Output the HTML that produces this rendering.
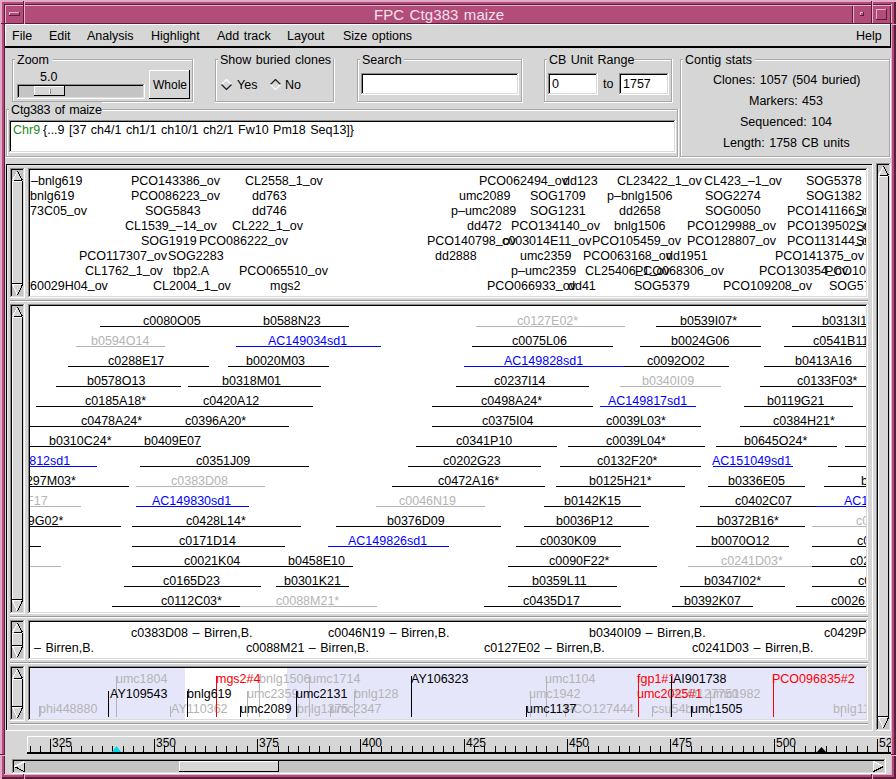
<!DOCTYPE html>
<html><head><meta charset="utf-8"><style>
html,body{margin:0;padding:0;}
body{width:896px;height:779px;overflow:hidden;position:relative;font-family:"Liberation Sans", sans-serif;font-size:12.5px;color:#000;}
b{position:absolute;display:block;}
i{position:absolute;font-style:normal;white-space:nowrap;line-height:14px;height:14px;word-spacing:1px;}
.c{position:absolute;overflow:hidden;}
u{text-decoration:none;position:relative;top:-2px;}
</style></head><body>
<b style="left:0px;top:0px;width:896px;height:779px;background:#b24c78"></b>
<b style="left:0px;top:0px;width:896px;height:2px;background:#e2aac6"></b>
<b style="left:0px;top:0px;width:2px;height:779px;background:#e2aac6"></b>
<b style="left:894px;top:2px;width:2px;height:777px;background:#5a1e3a"></b>
<b style="left:2px;top:777px;width:894px;height:2px;background:#5a1e3a"></b>
<b style="left:4px;top:4px;width:887px;height:1px;background:#5a1e3a"></b>
<b style="left:4px;top:4px;width:1px;height:771px;background:#5a1e3a"></b>
<b style="left:5px;top:5px;width:886px;height:1px;background:#e8b0cc"></b>
<b style="left:5px;top:5px;width:1px;height:19px;background:#e8b0cc"></b>
<b style="left:891px;top:4px;width:1px;height:771px;background:#e8b0cc"></b>
<b style="left:4px;top:774px;width:888px;height:1px;background:#e8b0cc"></b>
<b style="left:23px;top:1px;width:1px;height:23px;background:#5a1e3a"></b>
<b style="left:1px;top:23px;width:23px;height:1px;background:#5a1e3a"></b>
<b style="left:24px;top:0px;width:1px;height:24px;background:#e8b0cc"></b>
<b style="left:9px;top:12px;width:11px;height:1px;background:#e8b0cc"></b>
<b style="left:9px;top:12px;width:1px;height:4px;background:#e8b0cc"></b>
<b style="left:9px;top:15px;width:11px;height:1px;background:#5a1e3a"></b>
<b style="left:19px;top:12px;width:1px;height:4px;background:#5a1e3a"></b>
<b style="left:25px;top:23px;width:828px;height:1px;background:#5a1e3a"></b>
<b style="left:852px;top:6px;width:1px;height:18px;background:#5a1e3a"></b>
<b style="left:853px;top:5px;width:1px;height:19px;background:#e8b0cc"></b>
<b style="left:871px;top:1px;width:1px;height:23px;background:#5a1e3a"></b>
<b style="left:872px;top:0px;width:1px;height:24px;background:#e8b0cc"></b>
<b style="left:853px;top:23px;width:39px;height:1px;background:#5a1e3a"></b>
<b style="left:890px;top:6px;width:1px;height:18px;background:#5a1e3a"></b>
<b style="left:860px;top:12px;width:4px;height:1px;background:#e8b0cc"></b>
<b style="left:860px;top:12px;width:1px;height:4px;background:#e8b0cc"></b>
<b style="left:860px;top:15px;width:4px;height:1px;background:#5a1e3a"></b>
<b style="left:863px;top:12px;width:1px;height:4px;background:#5a1e3a"></b>
<b style="left:891px;top:24px;width:5px;height:1px;background:#e8b0cc"></b>
<b style="left:876px;top:9px;width:11px;height:1px;background:#e8b0cc"></b>
<b style="left:876px;top:9px;width:1px;height:11px;background:#e8b0cc"></b>
<b style="left:876px;top:19px;width:11px;height:1px;background:#5a1e3a"></b>
<b style="left:886px;top:9px;width:1px;height:11px;background:#5a1e3a"></b>
<i style="left:374px;top:8px;color:#f4e2ea;font-size:15px;letter-spacing:0.1px;">FPC Ctg383 maize</i>
<b style="left:5px;top:24px;width:886px;height:750px;background:#d6d6d6"></b>
<b style="left:5px;top:24px;width:886px;height:1px;background:#ffffff"></b>
<b style="left:5px;top:24px;width:1px;height:23px;background:#ffffff"></b>
<b style="left:5px;top:46px;width:886px;height:2px;background:#000"></b>
<b style="left:890px;top:24px;width:1px;height:24px;background:#000"></b>
<i style="left:12px;top:29px;">File</i>
<i style="left:49px;top:29px;">Edit</i>
<i style="left:87px;top:29px;">Analysis</i>
<i style="left:151px;top:29px;">Highlight</i>
<i style="left:217px;top:29px;">Add track</i>
<i style="left:287px;top:29px;">Layout</i>
<i style="left:343px;top:29px;">Size options</i>
<i style="left:856px;top:29px;">Help</i>
<b style="left:12px;top:59px;width:182px;height:1px;background:#a8a8a8"></b>
<b style="left:12px;top:59px;width:1px;height:44px;background:#a8a8a8"></b>
<b style="left:12px;top:102px;width:182px;height:1px;background:#ffffff"></b>
<b style="left:193px;top:59px;width:1px;height:44px;background:#ffffff"></b>
<b style="left:13px;top:60px;width:180px;height:1px;background:#ffffff"></b>
<b style="left:13px;top:60px;width:1px;height:42px;background:#ffffff"></b>
<b style="left:13px;top:101px;width:180px;height:1px;background:#a8a8a8"></b>
<b style="left:192px;top:60px;width:1px;height:42px;background:#a8a8a8"></b>
<b style="left:15px;top:52px;width:38px;height:12px;background:#d6d6d6"></b>
<i style="left:17px;top:53px;">Zoom</i>
<i style="left:40px;top:70px;">5.0</i>
<b style="left:17px;top:84px;width:128px;height:15px;background:#c4c4c4"></b>
<b style="left:17px;top:84px;width:127px;height:1px;background:#8c8c8c"></b>
<b style="left:17px;top:84px;width:1px;height:14px;background:#8c8c8c"></b>
<b style="left:18px;top:85px;width:126px;height:1px;background:#000"></b>
<b style="left:18px;top:85px;width:1px;height:13px;background:#000"></b>
<b style="left:18px;top:97px;width:126px;height:1px;background:#dadada"></b>
<b style="left:143px;top:85px;width:1px;height:13px;background:#dadada"></b>
<b style="left:17px;top:98px;width:128px;height:1px;background:#fff"></b>
<b style="left:144px;top:84px;width:1px;height:15px;background:#fff"></b>
<b style="left:34px;top:86px;width:31px;height:10px;background:#d6d6d6"></b>
<b style="left:34px;top:86px;width:31px;height:1px;background:#ffffff"></b>
<b style="left:34px;top:86px;width:1px;height:10px;background:#ffffff"></b>
<b style="left:34px;top:95px;width:31px;height:1px;background:#000"></b>
<b style="left:64px;top:86px;width:1px;height:10px;background:#000"></b>
<b style="left:49px;top:89px;width:1px;height:5px;background:#ffffff"></b>
<b style="left:50px;top:89px;width:1px;height:5px;background:#888"></b>
<b style="left:149px;top:70px;width:41px;height:29px;background:#d6d6d6"></b>
<b style="left:149px;top:70px;width:41px;height:1px;background:#fff"></b>
<b style="left:149px;top:70px;width:1px;height:29px;background:#fff"></b>
<b style="left:149px;top:98px;width:41px;height:1px;background:#000"></b>
<b style="left:189px;top:70px;width:1px;height:29px;background:#000"></b>
<i style="left:153px;top:78px;font-size:12px;">Whole</i>
<b style="left:215px;top:59px;width:120px;height:1px;background:#a8a8a8"></b>
<b style="left:215px;top:59px;width:1px;height:44px;background:#a8a8a8"></b>
<b style="left:215px;top:102px;width:120px;height:1px;background:#ffffff"></b>
<b style="left:334px;top:59px;width:1px;height:44px;background:#ffffff"></b>
<b style="left:216px;top:60px;width:118px;height:1px;background:#ffffff"></b>
<b style="left:216px;top:60px;width:1px;height:42px;background:#ffffff"></b>
<b style="left:216px;top:101px;width:118px;height:1px;background:#a8a8a8"></b>
<b style="left:333px;top:60px;width:1px;height:42px;background:#a8a8a8"></b>
<b style="left:218px;top:52px;width:115px;height:12px;background:#d6d6d6"></b>
<i style="left:220px;top:53px;">Show buried clones</i>
<i style="left:237px;top:78px;">Yes</i>
<i style="left:285px;top:78px;">No</i>
<b style="left:357px;top:59px;width:166px;height:1px;background:#a8a8a8"></b>
<b style="left:357px;top:59px;width:1px;height:44px;background:#a8a8a8"></b>
<b style="left:357px;top:102px;width:166px;height:1px;background:#ffffff"></b>
<b style="left:522px;top:59px;width:1px;height:44px;background:#ffffff"></b>
<b style="left:358px;top:60px;width:164px;height:1px;background:#ffffff"></b>
<b style="left:358px;top:60px;width:1px;height:42px;background:#ffffff"></b>
<b style="left:358px;top:101px;width:164px;height:1px;background:#a8a8a8"></b>
<b style="left:521px;top:60px;width:1px;height:42px;background:#a8a8a8"></b>
<b style="left:360px;top:52px;width:44px;height:12px;background:#d6d6d6"></b>
<i style="left:362px;top:53px;">Search</i>
<b style="left:361px;top:73px;width:158px;height:22px;background:#fff"></b>
<b style="left:361px;top:73px;width:157px;height:1px;background:#8c8c8c"></b>
<b style="left:361px;top:73px;width:1px;height:21px;background:#8c8c8c"></b>
<b style="left:362px;top:74px;width:156px;height:1px;background:#000"></b>
<b style="left:362px;top:74px;width:1px;height:20px;background:#000"></b>
<b style="left:362px;top:93px;width:156px;height:1px;background:#dadada"></b>
<b style="left:517px;top:74px;width:1px;height:20px;background:#dadada"></b>
<b style="left:361px;top:94px;width:158px;height:1px;background:#fff"></b>
<b style="left:518px;top:73px;width:1px;height:22px;background:#fff"></b>
<b style="left:544px;top:59px;width:129px;height:1px;background:#a8a8a8"></b>
<b style="left:544px;top:59px;width:1px;height:44px;background:#a8a8a8"></b>
<b style="left:544px;top:102px;width:129px;height:1px;background:#ffffff"></b>
<b style="left:672px;top:59px;width:1px;height:44px;background:#ffffff"></b>
<b style="left:545px;top:60px;width:127px;height:1px;background:#ffffff"></b>
<b style="left:545px;top:60px;width:1px;height:42px;background:#ffffff"></b>
<b style="left:545px;top:101px;width:127px;height:1px;background:#a8a8a8"></b>
<b style="left:671px;top:60px;width:1px;height:42px;background:#a8a8a8"></b>
<b style="left:547px;top:52px;width:87px;height:12px;background:#d6d6d6"></b>
<i style="left:549px;top:53px;">CB Unit Range</i>
<b style="left:548px;top:73px;width:50px;height:22px;background:#fff"></b>
<b style="left:548px;top:73px;width:49px;height:1px;background:#8c8c8c"></b>
<b style="left:548px;top:73px;width:1px;height:21px;background:#8c8c8c"></b>
<b style="left:549px;top:74px;width:48px;height:1px;background:#000"></b>
<b style="left:549px;top:74px;width:1px;height:20px;background:#000"></b>
<b style="left:549px;top:93px;width:48px;height:1px;background:#dadada"></b>
<b style="left:596px;top:74px;width:1px;height:20px;background:#dadada"></b>
<b style="left:548px;top:94px;width:50px;height:1px;background:#fff"></b>
<b style="left:597px;top:73px;width:1px;height:22px;background:#fff"></b>
<b style="left:619px;top:73px;width:50px;height:22px;background:#fff"></b>
<b style="left:619px;top:73px;width:49px;height:1px;background:#8c8c8c"></b>
<b style="left:619px;top:73px;width:1px;height:21px;background:#8c8c8c"></b>
<b style="left:620px;top:74px;width:48px;height:1px;background:#000"></b>
<b style="left:620px;top:74px;width:1px;height:20px;background:#000"></b>
<b style="left:620px;top:93px;width:48px;height:1px;background:#dadada"></b>
<b style="left:667px;top:74px;width:1px;height:20px;background:#dadada"></b>
<b style="left:619px;top:94px;width:50px;height:1px;background:#fff"></b>
<b style="left:668px;top:73px;width:1px;height:22px;background:#fff"></b>
<i style="left:552px;top:77px;">0</i>
<i style="left:603px;top:77px;">to</i>
<i style="left:623px;top:77px;">1757</i>
<b style="left:680px;top:59px;width:211px;height:1px;background:#a8a8a8"></b>
<b style="left:680px;top:59px;width:1px;height:99px;background:#a8a8a8"></b>
<b style="left:680px;top:157px;width:211px;height:1px;background:#ffffff"></b>
<b style="left:890px;top:59px;width:1px;height:99px;background:#ffffff"></b>
<b style="left:681px;top:60px;width:209px;height:1px;background:#ffffff"></b>
<b style="left:681px;top:60px;width:1px;height:97px;background:#ffffff"></b>
<b style="left:681px;top:156px;width:209px;height:1px;background:#a8a8a8"></b>
<b style="left:889px;top:60px;width:1px;height:97px;background:#a8a8a8"></b>
<b style="left:683px;top:52px;width:72px;height:12px;background:#d6d6d6"></b>
<i style="left:685px;top:53px;">Contig stats</i>
<i style="left:713px;top:73px;">Clones: 1057 (504 buried)</i>
<i style="left:749px;top:94px;">Markers: 453</i>
<i style="left:740px;top:115px;">Sequenced: 104</i>
<i style="left:723px;top:136px;">Length: 1758 CB units</i>
<b style="left:6px;top:109px;width:673px;height:1px;background:#a8a8a8"></b>
<b style="left:6px;top:109px;width:1px;height:49px;background:#a8a8a8"></b>
<b style="left:6px;top:157px;width:673px;height:1px;background:#ffffff"></b>
<b style="left:678px;top:109px;width:1px;height:49px;background:#ffffff"></b>
<b style="left:7px;top:110px;width:671px;height:1px;background:#ffffff"></b>
<b style="left:7px;top:110px;width:1px;height:47px;background:#ffffff"></b>
<b style="left:7px;top:156px;width:671px;height:1px;background:#a8a8a8"></b>
<b style="left:677px;top:110px;width:1px;height:47px;background:#a8a8a8"></b>
<b style="left:9px;top:102px;width:93px;height:13px;background:#d6d6d6"></b>
<i style="left:11px;top:103px;letter-spacing:-0.15px;">Ctg383 of maize</i>
<b style="left:9px;top:120px;width:667px;height:33px;background:#fff"></b>
<b style="left:9px;top:120px;width:666px;height:1px;background:#8c8c8c"></b>
<b style="left:9px;top:120px;width:1px;height:32px;background:#8c8c8c"></b>
<b style="left:10px;top:121px;width:665px;height:1px;background:#000"></b>
<b style="left:10px;top:121px;width:1px;height:31px;background:#000"></b>
<b style="left:10px;top:151px;width:665px;height:1px;background:#dadada"></b>
<b style="left:674px;top:121px;width:1px;height:31px;background:#dadada"></b>
<b style="left:9px;top:152px;width:667px;height:1px;background:#fff"></b>
<b style="left:675px;top:120px;width:1px;height:33px;background:#fff"></b>
<i style="left:13px;top:123px;color:#1a8a1a;">Chr9</i>
<i style="left:43px;top:123px;">{...9 [37 ch4/1 ch1/1 ch10/1 ch2/1 Fw10 Pm18 Seq13]}</i>
<b style="left:6px;top:164px;width:867px;height:1px;background:#000"></b>
<b style="left:6px;top:164px;width:1px;height:567px;background:#000"></b>
<b style="left:7px;top:165px;width:865px;height:1px;background:#e6e6e6"></b>
<b style="left:7px;top:165px;width:1px;height:565px;background:#e6e6e6"></b>
<b style="left:6px;top:730px;width:867px;height:1px;background:#fff"></b>
<b style="left:872px;top:164px;width:1px;height:567px;background:#fff"></b>
<b style="left:28px;top:168px;width:840px;height:130px;background:#fff"></b>
<b style="left:28px;top:168px;width:839px;height:1px;background:#8c8c8c"></b>
<b style="left:28px;top:168px;width:1px;height:129px;background:#8c8c8c"></b>
<b style="left:29px;top:169px;width:838px;height:1px;background:#000"></b>
<b style="left:29px;top:169px;width:1px;height:128px;background:#000"></b>
<b style="left:29px;top:296px;width:838px;height:1px;background:#dadada"></b>
<b style="left:866px;top:169px;width:1px;height:128px;background:#dadada"></b>
<b style="left:28px;top:297px;width:840px;height:1px;background:#fff"></b>
<b style="left:867px;top:168px;width:1px;height:130px;background:#fff"></b>
<b style="left:10px;top:168px;width:15px;height:130px;background:#c4c4c4"></b>
<b style="left:10px;top:168px;width:14px;height:1px;background:#8c8c8c"></b>
<b style="left:10px;top:168px;width:1px;height:129px;background:#8c8c8c"></b>
<b style="left:11px;top:169px;width:13px;height:1px;background:#000"></b>
<b style="left:11px;top:169px;width:1px;height:128px;background:#000"></b>
<b style="left:11px;top:296px;width:13px;height:1px;background:#dadada"></b>
<b style="left:23px;top:169px;width:1px;height:128px;background:#dadada"></b>
<b style="left:10px;top:297px;width:15px;height:1px;background:#fff"></b>
<b style="left:24px;top:168px;width:1px;height:130px;background:#fff"></b>
<svg style="position:absolute;left:12px;top:170px" width="11" height="11" shape-rendering="crispEdges"><polygon points="5.5,1 0,11 11,11" fill="#d6d6d6" shape-rendering="auto"/><line x1="0.5" y1="10.5" x2="5.5" y2="1" stroke="#fff"/><line x1="5.5" y1="1" x2="10.5" y2="10.5" stroke="#000"/><line x1="2" y1="10.5" x2="10" y2="10.5" stroke="#000"/></svg>
<svg style="position:absolute;left:12px;top:284px" width="11" height="12" shape-rendering="crispEdges"><polygon points="0,0 11,0 5.5,11.5" fill="#d6d6d6" shape-rendering="auto"/><line x1="1" y1="0.5" x2="10" y2="0.5" stroke="#fff"/><line x1="0.5" y1="0.5" x2="5.5" y2="11.5" stroke="#fff"/><line x1="10.5" y1="0.5" x2="5.5" y2="11.5" stroke="#000"/></svg>
<b style="left:12px;top:181px;width:11px;height:103px;background:#d6d6d6"></b>
<b style="left:12px;top:181px;width:11px;height:1px;background:#fff"></b>
<b style="left:12px;top:181px;width:1px;height:103px;background:#fff"></b>
<b style="left:12px;top:283px;width:11px;height:1px;background:#000"></b>
<b style="left:22px;top:181px;width:1px;height:103px;background:#000"></b>
<b style="left:28px;top:304px;width:840px;height:310px;background:#fff"></b>
<b style="left:28px;top:304px;width:839px;height:1px;background:#8c8c8c"></b>
<b style="left:28px;top:304px;width:1px;height:309px;background:#8c8c8c"></b>
<b style="left:29px;top:305px;width:838px;height:1px;background:#000"></b>
<b style="left:29px;top:305px;width:1px;height:308px;background:#000"></b>
<b style="left:29px;top:612px;width:838px;height:1px;background:#dadada"></b>
<b style="left:866px;top:305px;width:1px;height:308px;background:#dadada"></b>
<b style="left:28px;top:613px;width:840px;height:1px;background:#fff"></b>
<b style="left:867px;top:304px;width:1px;height:310px;background:#fff"></b>
<b style="left:10px;top:304px;width:15px;height:310px;background:#c4c4c4"></b>
<b style="left:10px;top:304px;width:14px;height:1px;background:#8c8c8c"></b>
<b style="left:10px;top:304px;width:1px;height:309px;background:#8c8c8c"></b>
<b style="left:11px;top:305px;width:13px;height:1px;background:#000"></b>
<b style="left:11px;top:305px;width:1px;height:308px;background:#000"></b>
<b style="left:11px;top:612px;width:13px;height:1px;background:#dadada"></b>
<b style="left:23px;top:305px;width:1px;height:308px;background:#dadada"></b>
<b style="left:10px;top:613px;width:15px;height:1px;background:#fff"></b>
<b style="left:24px;top:304px;width:1px;height:310px;background:#fff"></b>
<svg style="position:absolute;left:12px;top:306px" width="11" height="11" shape-rendering="crispEdges"><polygon points="5.5,1 0,11 11,11" fill="#d6d6d6" shape-rendering="auto"/><line x1="0.5" y1="10.5" x2="5.5" y2="1" stroke="#fff"/><line x1="5.5" y1="1" x2="10.5" y2="10.5" stroke="#000"/><line x1="2" y1="10.5" x2="10" y2="10.5" stroke="#000"/></svg>
<svg style="position:absolute;left:12px;top:600px" width="11" height="12" shape-rendering="crispEdges"><polygon points="0,0 11,0 5.5,11.5" fill="#d6d6d6" shape-rendering="auto"/><line x1="1" y1="0.5" x2="10" y2="0.5" stroke="#fff"/><line x1="0.5" y1="0.5" x2="5.5" y2="11.5" stroke="#fff"/><line x1="10.5" y1="0.5" x2="5.5" y2="11.5" stroke="#000"/></svg>
<b style="left:12px;top:317px;width:11px;height:283px;background:#d6d6d6"></b>
<b style="left:12px;top:317px;width:11px;height:1px;background:#fff"></b>
<b style="left:12px;top:317px;width:1px;height:283px;background:#fff"></b>
<b style="left:12px;top:599px;width:11px;height:1px;background:#000"></b>
<b style="left:22px;top:317px;width:1px;height:283px;background:#000"></b>
<b style="left:28px;top:620px;width:840px;height:40px;background:#fff"></b>
<b style="left:28px;top:620px;width:839px;height:1px;background:#8c8c8c"></b>
<b style="left:28px;top:620px;width:1px;height:39px;background:#8c8c8c"></b>
<b style="left:29px;top:621px;width:838px;height:1px;background:#000"></b>
<b style="left:29px;top:621px;width:1px;height:38px;background:#000"></b>
<b style="left:29px;top:658px;width:838px;height:1px;background:#dadada"></b>
<b style="left:866px;top:621px;width:1px;height:38px;background:#dadada"></b>
<b style="left:28px;top:659px;width:840px;height:1px;background:#fff"></b>
<b style="left:867px;top:620px;width:1px;height:40px;background:#fff"></b>
<b style="left:10px;top:620px;width:15px;height:40px;background:#c4c4c4"></b>
<b style="left:10px;top:620px;width:14px;height:1px;background:#8c8c8c"></b>
<b style="left:10px;top:620px;width:1px;height:39px;background:#8c8c8c"></b>
<b style="left:11px;top:621px;width:13px;height:1px;background:#000"></b>
<b style="left:11px;top:621px;width:1px;height:38px;background:#000"></b>
<b style="left:11px;top:658px;width:13px;height:1px;background:#dadada"></b>
<b style="left:23px;top:621px;width:1px;height:38px;background:#dadada"></b>
<b style="left:10px;top:659px;width:15px;height:1px;background:#fff"></b>
<b style="left:24px;top:620px;width:1px;height:40px;background:#fff"></b>
<svg style="position:absolute;left:12px;top:622px" width="11" height="11" shape-rendering="crispEdges"><polygon points="5.5,1 0,11 11,11" fill="#d6d6d6" shape-rendering="auto"/><line x1="0.5" y1="10.5" x2="5.5" y2="1" stroke="#fff"/><line x1="5.5" y1="1" x2="10.5" y2="10.5" stroke="#000"/><line x1="2" y1="10.5" x2="10" y2="10.5" stroke="#000"/></svg>
<svg style="position:absolute;left:12px;top:646px" width="11" height="12" shape-rendering="crispEdges"><polygon points="0,0 11,0 5.5,11.5" fill="#d6d6d6" shape-rendering="auto"/><line x1="1" y1="0.5" x2="10" y2="0.5" stroke="#fff"/><line x1="0.5" y1="0.5" x2="5.5" y2="11.5" stroke="#fff"/><line x1="10.5" y1="0.5" x2="5.5" y2="11.5" stroke="#000"/></svg>
<b style="left:12px;top:633px;width:11px;height:13px;background:#d6d6d6"></b>
<b style="left:12px;top:633px;width:11px;height:1px;background:#fff"></b>
<b style="left:12px;top:633px;width:1px;height:13px;background:#fff"></b>
<b style="left:12px;top:645px;width:11px;height:1px;background:#000"></b>
<b style="left:22px;top:633px;width:1px;height:13px;background:#000"></b>
<b style="left:28px;top:666px;width:840px;height:55px;background:#e6e6fa"></b>
<b style="left:28px;top:666px;width:839px;height:1px;background:#8c8c8c"></b>
<b style="left:28px;top:666px;width:1px;height:54px;background:#8c8c8c"></b>
<b style="left:29px;top:667px;width:838px;height:1px;background:#000"></b>
<b style="left:29px;top:667px;width:1px;height:53px;background:#000"></b>
<b style="left:29px;top:719px;width:838px;height:1px;background:#dadada"></b>
<b style="left:866px;top:667px;width:1px;height:53px;background:#dadada"></b>
<b style="left:28px;top:720px;width:840px;height:1px;background:#fff"></b>
<b style="left:867px;top:666px;width:1px;height:55px;background:#fff"></b>
<b style="left:10px;top:666px;width:15px;height:55px;background:#c4c4c4"></b>
<b style="left:10px;top:666px;width:14px;height:1px;background:#8c8c8c"></b>
<b style="left:10px;top:666px;width:1px;height:54px;background:#8c8c8c"></b>
<b style="left:11px;top:667px;width:13px;height:1px;background:#000"></b>
<b style="left:11px;top:667px;width:1px;height:53px;background:#000"></b>
<b style="left:11px;top:719px;width:13px;height:1px;background:#dadada"></b>
<b style="left:23px;top:667px;width:1px;height:53px;background:#dadada"></b>
<b style="left:10px;top:720px;width:15px;height:1px;background:#fff"></b>
<b style="left:24px;top:666px;width:1px;height:55px;background:#fff"></b>
<svg style="position:absolute;left:12px;top:668px" width="11" height="11" shape-rendering="crispEdges"><polygon points="5.5,1 0,11 11,11" fill="#d6d6d6" shape-rendering="auto"/><line x1="0.5" y1="10.5" x2="5.5" y2="1" stroke="#fff"/><line x1="5.5" y1="1" x2="10.5" y2="10.5" stroke="#000"/><line x1="2" y1="10.5" x2="10" y2="10.5" stroke="#000"/></svg>
<svg style="position:absolute;left:12px;top:707px" width="11" height="12" shape-rendering="crispEdges"><polygon points="0,0 11,0 5.5,11.5" fill="#d6d6d6" shape-rendering="auto"/><line x1="1" y1="0.5" x2="10" y2="0.5" stroke="#fff"/><line x1="0.5" y1="0.5" x2="5.5" y2="11.5" stroke="#fff"/><line x1="10.5" y1="0.5" x2="5.5" y2="11.5" stroke="#000"/></svg>
<b style="left:12px;top:679px;width:11px;height:28px;background:#d6d6d6"></b>
<b style="left:12px;top:679px;width:11px;height:1px;background:#fff"></b>
<b style="left:12px;top:679px;width:1px;height:28px;background:#fff"></b>
<b style="left:12px;top:706px;width:11px;height:1px;background:#000"></b>
<b style="left:22px;top:679px;width:1px;height:28px;background:#000"></b>
<b style="left:10px;top:300px;width:858px;height:1px;background:#989898"></b>
<b style="left:10px;top:301px;width:858px;height:1px;background:#fff"></b>
<b style="left:10px;top:616px;width:858px;height:1px;background:#989898"></b>
<b style="left:10px;top:617px;width:858px;height:1px;background:#fff"></b>
<b style="left:10px;top:662px;width:858px;height:1px;background:#989898"></b>
<b style="left:10px;top:663px;width:858px;height:1px;background:#fff"></b>
<b style="left:10px;top:723px;width:858px;height:1px;background:#989898"></b>
<b style="left:10px;top:724px;width:858px;height:1px;background:#fff"></b>
<b style="left:876px;top:163px;width:15px;height:568px;background:#c4c4c4"></b>
<b style="left:876px;top:163px;width:14px;height:1px;background:#8c8c8c"></b>
<b style="left:876px;top:163px;width:1px;height:567px;background:#8c8c8c"></b>
<b style="left:877px;top:164px;width:13px;height:1px;background:#000"></b>
<b style="left:877px;top:164px;width:1px;height:566px;background:#000"></b>
<b style="left:877px;top:729px;width:13px;height:1px;background:#dadada"></b>
<b style="left:889px;top:164px;width:1px;height:566px;background:#dadada"></b>
<b style="left:876px;top:730px;width:15px;height:1px;background:#fff"></b>
<b style="left:890px;top:163px;width:1px;height:568px;background:#fff"></b>
<svg style="position:absolute;left:878px;top:165px" width="11" height="11" shape-rendering="crispEdges"><polygon points="5.5,1 0,11 11,11" fill="#d6d6d6" shape-rendering="auto"/><line x1="0.5" y1="10.5" x2="5.5" y2="1" stroke="#fff"/><line x1="5.5" y1="1" x2="10.5" y2="10.5" stroke="#000"/><line x1="2" y1="10.5" x2="10" y2="10.5" stroke="#000"/></svg>
<svg style="position:absolute;left:878px;top:717px" width="11" height="12" shape-rendering="crispEdges"><polygon points="0,0 11,0 5.5,11.5" fill="#d6d6d6" shape-rendering="auto"/><line x1="1" y1="0.5" x2="10" y2="0.5" stroke="#fff"/><line x1="0.5" y1="0.5" x2="5.5" y2="11.5" stroke="#fff"/><line x1="10.5" y1="0.5" x2="5.5" y2="11.5" stroke="#000"/></svg>
<b style="left:878px;top:176px;width:11px;height:541px;background:#d6d6d6"></b>
<b style="left:878px;top:176px;width:11px;height:1px;background:#fff"></b>
<b style="left:878px;top:176px;width:1px;height:541px;background:#fff"></b>
<b style="left:878px;top:716px;width:11px;height:1px;background:#000"></b>
<b style="left:888px;top:176px;width:1px;height:541px;background:#000"></b>
<b style="left:27px;top:736px;width:864px;height:17px;background:#d6d6d6"></b>
<b style="left:27px;top:736px;width:864px;height:1px;background:#fff"></b>
<b style="left:27px;top:736px;width:1px;height:17px;background:#fff"></b>
<b style="left:27px;top:752px;width:864px;height:2px;background:#000"></b>
<b style="left:30px;top:746px;width:1px;height:6px;background:#000"></b>
<b style="left:40px;top:746px;width:1px;height:6px;background:#000"></b>
<b style="left:50px;top:739px;width:1px;height:13px;background:#000"></b>
<i style="left:52px;top:736px;font-size:12px;width:30px;overflow:hidden;">325</i>
<b style="left:61px;top:746px;width:1px;height:6px;background:#000"></b>
<b style="left:71px;top:746px;width:1px;height:6px;background:#000"></b>
<b style="left:81px;top:746px;width:1px;height:6px;background:#000"></b>
<b style="left:92px;top:746px;width:1px;height:6px;background:#000"></b>
<b style="left:102px;top:746px;width:1px;height:6px;background:#000"></b>
<b style="left:112px;top:746px;width:1px;height:6px;background:#000"></b>
<b style="left:123px;top:746px;width:1px;height:6px;background:#000"></b>
<b style="left:133px;top:746px;width:1px;height:6px;background:#000"></b>
<b style="left:143px;top:746px;width:1px;height:6px;background:#000"></b>
<b style="left:154px;top:739px;width:1px;height:13px;background:#000"></b>
<i style="left:156px;top:736px;font-size:12px;width:30px;overflow:hidden;">350</i>
<b style="left:164px;top:746px;width:1px;height:6px;background:#000"></b>
<b style="left:174px;top:746px;width:1px;height:6px;background:#000"></b>
<b style="left:185px;top:746px;width:1px;height:6px;background:#000"></b>
<b style="left:195px;top:746px;width:1px;height:6px;background:#000"></b>
<b style="left:205px;top:746px;width:1px;height:6px;background:#000"></b>
<b style="left:216px;top:746px;width:1px;height:6px;background:#000"></b>
<b style="left:226px;top:746px;width:1px;height:6px;background:#000"></b>
<b style="left:236px;top:746px;width:1px;height:6px;background:#000"></b>
<b style="left:247px;top:746px;width:1px;height:6px;background:#000"></b>
<b style="left:257px;top:739px;width:1px;height:13px;background:#000"></b>
<i style="left:259px;top:736px;font-size:12px;width:30px;overflow:hidden;">375</i>
<b style="left:267px;top:746px;width:1px;height:6px;background:#000"></b>
<b style="left:278px;top:746px;width:1px;height:6px;background:#000"></b>
<b style="left:288px;top:746px;width:1px;height:6px;background:#000"></b>
<b style="left:298px;top:746px;width:1px;height:6px;background:#000"></b>
<b style="left:309px;top:746px;width:1px;height:6px;background:#000"></b>
<b style="left:319px;top:746px;width:1px;height:6px;background:#000"></b>
<b style="left:329px;top:746px;width:1px;height:6px;background:#000"></b>
<b style="left:340px;top:746px;width:1px;height:6px;background:#000"></b>
<b style="left:350px;top:746px;width:1px;height:6px;background:#000"></b>
<b style="left:360px;top:739px;width:1px;height:13px;background:#000"></b>
<i style="left:362px;top:736px;font-size:12px;width:30px;overflow:hidden;">400</i>
<b style="left:371px;top:746px;width:1px;height:6px;background:#000"></b>
<b style="left:381px;top:746px;width:1px;height:6px;background:#000"></b>
<b style="left:391px;top:746px;width:1px;height:6px;background:#000"></b>
<b style="left:402px;top:746px;width:1px;height:6px;background:#000"></b>
<b style="left:412px;top:746px;width:1px;height:6px;background:#000"></b>
<b style="left:422px;top:746px;width:1px;height:6px;background:#000"></b>
<b style="left:433px;top:746px;width:1px;height:6px;background:#000"></b>
<b style="left:443px;top:746px;width:1px;height:6px;background:#000"></b>
<b style="left:453px;top:746px;width:1px;height:6px;background:#000"></b>
<b style="left:464px;top:739px;width:1px;height:13px;background:#000"></b>
<i style="left:466px;top:736px;font-size:12px;width:30px;overflow:hidden;">425</i>
<b style="left:474px;top:746px;width:1px;height:6px;background:#000"></b>
<b style="left:484px;top:746px;width:1px;height:6px;background:#000"></b>
<b style="left:495px;top:746px;width:1px;height:6px;background:#000"></b>
<b style="left:505px;top:746px;width:1px;height:6px;background:#000"></b>
<b style="left:515px;top:746px;width:1px;height:6px;background:#000"></b>
<b style="left:526px;top:746px;width:1px;height:6px;background:#000"></b>
<b style="left:536px;top:746px;width:1px;height:6px;background:#000"></b>
<b style="left:546px;top:746px;width:1px;height:6px;background:#000"></b>
<b style="left:557px;top:746px;width:1px;height:6px;background:#000"></b>
<b style="left:567px;top:739px;width:1px;height:13px;background:#000"></b>
<i style="left:569px;top:736px;font-size:12px;width:30px;overflow:hidden;">450</i>
<b style="left:577px;top:746px;width:1px;height:6px;background:#000"></b>
<b style="left:588px;top:746px;width:1px;height:6px;background:#000"></b>
<b style="left:598px;top:746px;width:1px;height:6px;background:#000"></b>
<b style="left:608px;top:746px;width:1px;height:6px;background:#000"></b>
<b style="left:619px;top:746px;width:1px;height:6px;background:#000"></b>
<b style="left:629px;top:746px;width:1px;height:6px;background:#000"></b>
<b style="left:639px;top:746px;width:1px;height:6px;background:#000"></b>
<b style="left:650px;top:746px;width:1px;height:6px;background:#000"></b>
<b style="left:660px;top:746px;width:1px;height:6px;background:#000"></b>
<b style="left:670px;top:739px;width:1px;height:13px;background:#000"></b>
<i style="left:672px;top:736px;font-size:12px;width:30px;overflow:hidden;">475</i>
<b style="left:681px;top:746px;width:1px;height:6px;background:#000"></b>
<b style="left:691px;top:746px;width:1px;height:6px;background:#000"></b>
<b style="left:701px;top:746px;width:1px;height:6px;background:#000"></b>
<b style="left:712px;top:746px;width:1px;height:6px;background:#000"></b>
<b style="left:722px;top:746px;width:1px;height:6px;background:#000"></b>
<b style="left:732px;top:746px;width:1px;height:6px;background:#000"></b>
<b style="left:743px;top:746px;width:1px;height:6px;background:#000"></b>
<b style="left:753px;top:746px;width:1px;height:6px;background:#000"></b>
<b style="left:763px;top:746px;width:1px;height:6px;background:#000"></b>
<b style="left:774px;top:739px;width:1px;height:13px;background:#000"></b>
<i style="left:776px;top:736px;font-size:12px;width:30px;overflow:hidden;">500</i>
<b style="left:784px;top:746px;width:1px;height:6px;background:#000"></b>
<b style="left:794px;top:746px;width:1px;height:6px;background:#000"></b>
<b style="left:805px;top:746px;width:1px;height:6px;background:#000"></b>
<b style="left:815px;top:746px;width:1px;height:6px;background:#000"></b>
<b style="left:826px;top:746px;width:1px;height:6px;background:#000"></b>
<b style="left:836px;top:746px;width:1px;height:6px;background:#000"></b>
<b style="left:846px;top:746px;width:1px;height:6px;background:#000"></b>
<b style="left:857px;top:746px;width:1px;height:6px;background:#000"></b>
<b style="left:867px;top:746px;width:1px;height:6px;background:#000"></b>
<b style="left:877px;top:739px;width:1px;height:13px;background:#000"></b>
<i style="left:879px;top:736px;font-size:12px;width:12px;overflow:hidden;">525</i>
<b style="left:888px;top:746px;width:1px;height:6px;background:#000"></b>
<svg style="position:absolute;left:112px;top:746px" width="9" height="6"><polygon points="4.5,0 9,6 0,6" fill="#00d8e8"/></svg>
<svg style="position:absolute;left:817px;top:747px" width="9" height="5"><polygon points="4.5,0 9,5 0,5" fill="#000"/></svg>
<b style="left:12px;top:759px;width:874px;height:15px;background:#c4c4c4"></b>
<b style="left:12px;top:759px;width:873px;height:1px;background:#8c8c8c"></b>
<b style="left:12px;top:759px;width:1px;height:14px;background:#8c8c8c"></b>
<b style="left:13px;top:760px;width:872px;height:1px;background:#000"></b>
<b style="left:13px;top:760px;width:1px;height:13px;background:#000"></b>
<b style="left:13px;top:772px;width:872px;height:1px;background:#dadada"></b>
<b style="left:884px;top:760px;width:1px;height:13px;background:#dadada"></b>
<b style="left:12px;top:773px;width:874px;height:1px;background:#fff"></b>
<b style="left:885px;top:759px;width:1px;height:15px;background:#fff"></b>
<svg style="position:absolute;left:14px;top:761px" width="11" height="11" shape-rendering="crispEdges"><polygon points="0.5,5.5 11,0 11,11" fill="#d6d6d6" shape-rendering="auto"/><line x1="0.5" y1="5.5" x2="10.5" y2="0.5" stroke="#fff"/><line x1="1.5" y1="6" x2="10" y2="10.5" stroke="#000"/><line x1="10.5" y1="2" x2="10.5" y2="11" stroke="#000"/></svg>
<svg style="position:absolute;left:873px;top:761px" width="11" height="11" shape-rendering="crispEdges"><polygon points="0,0 10.5,5.5 0,11" fill="#d6d6d6" shape-rendering="auto"/><line x1="0.5" y1="0.5" x2="0.5" y2="10.5" stroke="#fff"/><line x1="0.5" y1="0.5" x2="10.5" y2="5.5" stroke="#fff"/><line x1="0.5" y1="10.5" x2="10.5" y2="5.5" stroke="#000"/></svg>
<b style="left:179px;top:761px;width:100px;height:11px;background:#d6d6d6"></b>
<b style="left:179px;top:761px;width:100px;height:1px;background:#fff"></b>
<b style="left:179px;top:761px;width:1px;height:11px;background:#fff"></b>
<b style="left:179px;top:771px;width:100px;height:1px;background:#000"></b>
<b style="left:278px;top:761px;width:1px;height:11px;background:#000"></b>
<b style="left:0px;top:754px;width:5px;height:1px;background:#5a1e3a"></b>
<b style="left:0px;top:755px;width:5px;height:1px;background:#e8b0cc"></b>
<b style="left:891px;top:754px;width:5px;height:1px;background:#5a1e3a"></b>
<b style="left:891px;top:755px;width:5px;height:1px;background:#e8b0cc"></b>
<b style="left:23px;top:774px;width:1px;height:5px;background:#5a1e3a"></b>
<b style="left:24px;top:774px;width:1px;height:5px;background:#e8b0cc"></b>
<b style="left:871px;top:774px;width:1px;height:5px;background:#5a1e3a"></b>
<b style="left:872px;top:774px;width:1px;height:5px;background:#e8b0cc"></b>
<svg style="position:absolute;left:221.0px;top:79.0px" width="11" height="11"><polygon points="5.5,0.5 10.5,5.5 5.5,10.5 0.5,5.5" fill="#d6d6d6"/><polyline points="0.5,5.5 5.5,0.5 10.5,5.5" fill="none" stroke="#fff" stroke-width="1.3"/><polyline points="0.5,5.5 5.5,10.5 10.5,5.5" fill="none" stroke="#202020" stroke-width="1.3"/></svg>
<svg style="position:absolute;left:270.0px;top:79.0px" width="11" height="11"><polygon points="5.5,0.5 10.5,5.5 5.5,10.5 0.5,5.5" fill="#d6d6d6"/><polyline points="0.5,5.5 5.5,0.5 10.5,5.5" fill="none" stroke="#202020" stroke-width="1.3"/><polyline points="0.5,5.5 5.5,10.5 10.5,5.5" fill="none" stroke="#fff" stroke-width="1.3"/></svg>
<div class="c" style="left:30px;top:170px;width:836px;height:126px">
<i style="left:1px;top:4px;">–bnlg619</i>
<i style="left:101px;top:4px;">PCO143386<u>_</u>ov</i>
<i style="left:215px;top:4px;">CL2558<u>_</u>1<u>_</u>ov</i>
<i style="left:449px;top:4px;">PCO062494<u>_</u>ov</i>
<i style="left:533px;top:4px;">dd123</i>
<i style="left:587px;top:4px;">CL23422<u>_</u>1<u>_</u>ov</i>
<i style="left:674px;top:4px;">CL423<u>_</u>–1<u>_</u>ov</i>
<i style="left:776px;top:4px;">SOG5378</i>
<i style="left:0px;top:19px;">bnlg619</i>
<i style="left:101px;top:19px;">PCO086223<u>_</u>ov</i>
<i style="left:222px;top:19px;">dd763</i>
<i style="left:429px;top:19px;">umc2089</i>
<i style="left:500px;top:19px;">SOG1709</i>
<i style="left:577px;top:19px;">p–bnlg1506</i>
<i style="left:675px;top:19px;">SOG2274</i>
<i style="left:776px;top:19px;">SOG1382</i>
<i style="left:0px;top:34px;">73C05<u>_</u>ov</i>
<i style="left:115px;top:34px;">SOG5843</i>
<i style="left:222px;top:34px;">dd746</i>
<i style="left:421px;top:34px;">p–umc2089</i>
<i style="left:500px;top:34px;">SOG1231</i>
<i style="left:589px;top:34px;">dd2658</i>
<i style="left:675px;top:34px;">SOG0050</i>
<i style="left:757px;top:34px;">PCO141166<u>_</u>ov</i>
<i style="left:826px;top:34px;">SOG1</i>
<i style="left:95px;top:49px;">CL1539<u>_</u>–14<u>_</u>ov</i>
<i style="left:202px;top:49px;">CL222<u>_</u>1<u>_</u>ov</i>
<i style="left:437px;top:49px;">dd472</i>
<i style="left:481px;top:49px;">PCO134140<u>_</u>ov</i>
<i style="left:584px;top:49px;">bnlg1506</i>
<i style="left:657px;top:49px;">PCO129988<u>_</u>ov</i>
<i style="left:757px;top:49px;">PCO139502<u>_</u>ov</i>
<i style="left:826px;top:49px;">SOG1</i>
<i style="left:111px;top:64px;">SOG1919</i>
<i style="left:169px;top:64px;">PCO086222<u>_</u>ov</i>
<i style="left:397px;top:64px;">PCO140798<u>_</u>ov</i>
<i style="left:472px;top:64px;">c003014E11<u>_</u>ov</i>
<i style="left:562px;top:64px;">PCO105459<u>_</u>ov</i>
<i style="left:657px;top:64px;">PCO128807<u>_</u>ov</i>
<i style="left:757px;top:64px;">PCO113144<u>_</u>ov</i>
<i style="left:826px;top:64px;">SOG1</i>
<i style="left:49px;top:79px;">PCO117307<u>_</u>ov</i>
<i style="left:138px;top:79px;">SOG2283</i>
<i style="left:405px;top:79px;">dd2888</i>
<i style="left:490px;top:79px;">umc2359</i>
<i style="left:553px;top:79px;">PCO063168<u>_</u>ov</i>
<i style="left:636px;top:79px;">dd1951</i>
<i style="left:745px;top:79px;">PCO141375<u>_</u>ov</i>
<i style="left:55px;top:94px;">CL1762<u>_</u>1<u>_</u>ov</i>
<i style="left:143px;top:94px;">tbp2.A</i>
<i style="left:209px;top:94px;">PCO065510<u>_</u>ov</i>
<i style="left:481px;top:94px;">p–umc2359</i>
<i style="left:555px;top:94px;">CL25406<u>_</u>1<u>_</u>ov</i>
<i style="left:605px;top:94px;">PCO068306<u>_</u>ov</i>
<i style="left:729px;top:94px;">PCO130354<u>_</u>ov</i>
<i style="left:795px;top:94px;">PCO104</i>
<i style="left:0px;top:109px;">60029H04<u>_</u>ov</i>
<i style="left:123px;top:109px;">CL2004<u>_</u>1<u>_</u>ov</i>
<i style="left:240px;top:109px;">mgs2</i>
<i style="left:457px;top:109px;">PCO066933<u>_</u>ov</i>
<i style="left:538px;top:109px;">dd41</i>
<i style="left:604px;top:109px;">SOG5379</i>
<i style="left:693px;top:109px;">PCO109208<u>_</u>ov</i>
<i style="left:799px;top:109px;">SOG5791</i>
</div>
<div class="c" style="left:30px;top:306px;width:836px;height:306px">
<b style="left:70px;top:20px;width:249px;height:1px;background:#000"></b>
<b style="left:446px;top:20px;width:149px;height:1px;background:#b4b4b4"></b>
<b style="left:626px;top:20px;width:105px;height:1px;background:#000"></b>
<b style="left:762px;top:20px;width:74px;height:1px;background:#000"></b>
<i style="left:113px;top:8px;">c0080O05</i>
<i style="left:233px;top:8px;">b0588N23</i>
<i style="left:487px;top:8px;color:#b4b4b4;">c0127E02*</i>
<i style="left:650px;top:8px;">b0539I07*</i>
<i style="left:792px;top:8px;">b0313I16</i>
<b style="left:46px;top:40px;width:89px;height:1px;background:#b4b4b4"></b>
<b style="left:206px;top:40px;width:145px;height:1px;background:#0000ff"></b>
<b style="left:442px;top:40px;width:141px;height:1px;background:#000"></b>
<b style="left:610px;top:40px;width:121px;height:1px;background:#000"></b>
<b style="left:754px;top:40px;width:82px;height:1px;background:#000"></b>
<i style="left:61px;top:28px;color:#b4b4b4;">b0594O14</i>
<i style="left:238px;top:28px;color:#0000ff;">AC149034sd1</i>
<i style="left:482px;top:28px;">c0075L06</i>
<i style="left:641px;top:28px;">b0024G06</i>
<i style="left:783px;top:28px;">c0541B11</i>
<b style="left:38px;top:60px;width:141px;height:1px;background:#000"></b>
<b style="left:198px;top:60px;width:101px;height:1px;background:#000"></b>
<b style="left:434px;top:60px;width:160px;height:1px;background:#0000ff"></b>
<b style="left:594px;top:60px;width:105px;height:1px;background:#000"></b>
<b style="left:734px;top:60px;width:102px;height:1px;background:#000"></b>
<i style="left:78px;top:48px;">c0288E17</i>
<i style="left:216px;top:48px;">b0020M03</i>
<i style="left:474px;top:48px;color:#0000ff;">AC149828sd1</i>
<i style="left:617px;top:48px;">c0092O02</i>
<i style="left:765px;top:48px;">b0413A16</i>
<b style="left:26px;top:80px;width:125px;height:1px;background:#000"></b>
<b style="left:158px;top:80px;width:133px;height:1px;background:#000"></b>
<b style="left:426px;top:80px;width:133px;height:1px;background:#000"></b>
<b style="left:590px;top:80px;width:101px;height:1px;background:#b4b4b4"></b>
<b style="left:730px;top:80px;width:106px;height:1px;background:#000"></b>
<i style="left:57px;top:68px;">b0578O13</i>
<i style="left:192px;top:68px;">b0318M01</i>
<i style="left:464px;top:68px;">c0237I14</i>
<i style="left:612px;top:68px;color:#b4b4b4;">b0340I09</i>
<i style="left:767px;top:68px;">c0133F03*</i>
<b style="left:6px;top:100px;width:277px;height:1px;background:#000"></b>
<b style="left:402px;top:100px;width:161px;height:1px;background:#000"></b>
<b style="left:570px;top:100px;width:96px;height:1px;background:#0000ff"></b>
<b style="left:714px;top:100px;width:109px;height:1px;background:#000"></b>
<i style="left:55px;top:88px;">c0185A18*</i>
<i style="left:173px;top:88px;">c0420A12</i>
<i style="left:451px;top:88px;">c0498A24*</i>
<i style="left:578px;top:88px;color:#0000ff;">AC149817sd1</i>
<i style="left:737px;top:88px;">b0119G21</i>
<b style="left:0px;top:120px;width:259px;height:1px;background:#000"></b>
<b style="left:402px;top:120px;width:269px;height:1px;background:#000"></b>
<b style="left:710px;top:120px;width:126px;height:1px;background:#000"></b>
<i style="left:51px;top:108px;">c0478A24*</i>
<i style="left:155px;top:108px;">c0396A20*</i>
<i style="left:452px;top:108px;">c0375I04</i>
<i style="left:576px;top:108px;">c0039L03*</i>
<i style="left:743px;top:108px;">c0384H21*</i>
<b style="left:0px;top:140px;width:171px;height:1px;background:#000"></b>
<b style="left:386px;top:140px;width:141px;height:1px;background:#000"></b>
<b style="left:538px;top:140px;width:137px;height:1px;background:#000"></b>
<b style="left:686px;top:140px;width:121px;height:1px;background:#000"></b>
<b style="left:815px;top:140px;width:21px;height:1px;background:#000"></b>
<i style="left:19px;top:128px;">b0310C24*</i>
<i style="left:114px;top:128px;">b0409E07</i>
<i style="left:426px;top:128px;">c0341P10</i>
<i style="left:576px;top:128px;">c0039L04*</i>
<i style="left:714px;top:128px;">b0645O24*</i>
<b style="left:0px;top:160px;width:67px;height:1px;background:#0000ff"></b>
<b style="left:110px;top:160px;width:169px;height:1px;background:#000"></b>
<b style="left:378px;top:160px;width:133px;height:1px;background:#000"></b>
<b style="left:530px;top:160px;width:141px;height:1px;background:#000"></b>
<b style="left:683px;top:160px;width:80px;height:1px;background:#0000ff"></b>
<b style="left:798px;top:160px;width:38px;height:1px;background:#000"></b>
<i style="left:-39px;top:148px;color:#0000ff;">AC149812sd1</i>
<i style="left:166px;top:148px;">c0351J09</i>
<i style="left:413px;top:148px;">c0202G23</i>
<i style="left:567px;top:148px;">c0132F20*</i>
<i style="left:682px;top:148px;color:#0000ff;">AC151049sd1</i>
<b style="left:0px;top:180px;width:99px;height:1px;background:#000"></b>
<b style="left:106px;top:180px;width:129px;height:1px;background:#b4b4b4"></b>
<b style="left:362px;top:180px;width:153px;height:1px;background:#000"></b>
<b style="left:526px;top:180px;width:129px;height:1px;background:#000"></b>
<b style="left:678px;top:180px;width:97px;height:1px;background:#000"></b>
<b style="left:794px;top:180px;width:42px;height:1px;background:#000"></b>
<i style="left:-18px;top:168px;">b0297M03*</i>
<i style="left:141px;top:168px;color:#b4b4b4;">c0383D08</i>
<i style="left:408px;top:168px;">c0472A16*</i>
<i style="left:559px;top:168px;">b0125H21*</i>
<i style="left:698px;top:168px;">b0336E05</i>
<i style="left:831px;top:168px;">b0</i>
<b style="left:0px;top:200px;width:51px;height:1px;background:#b4b4b4"></b>
<b style="left:106px;top:200px;width:113px;height:1px;background:#0000ff"></b>
<b style="left:346px;top:200px;width:109px;height:1px;background:#b4b4b4"></b>
<b style="left:514px;top:200px;width:97px;height:1px;background:#000"></b>
<b style="left:670px;top:200px;width:116px;height:1px;background:#000"></b>
<b style="left:786px;top:200px;width:50px;height:1px;background:#0000ff"></b>
<i style="left:-38px;top:188px;color:#b4b4b4;">c0355F17</i>
<i style="left:122px;top:188px;color:#0000ff;">AC149830sd1</i>
<i style="left:369px;top:188px;color:#b4b4b4;">c0046N19</i>
<i style="left:534px;top:188px;">b0142K15</i>
<i style="left:705px;top:188px;">c0402C07</i>
<i style="left:814px;top:188px;color:#0000ff;">AC1</i>
<b style="left:0px;top:220px;width:91px;height:1px;background:#000"></b>
<b style="left:102px;top:220px;width:169px;height:1px;background:#000"></b>
<b style="left:306px;top:220px;width:165px;height:1px;background:#000"></b>
<b style="left:494px;top:220px;width:125px;height:1px;background:#000"></b>
<b style="left:666px;top:220px;width:109px;height:1px;background:#000"></b>
<b style="left:782px;top:220px;width:54px;height:1px;background:#b4b4b4"></b>
<i style="left:-30px;top:208px;">b0409G02*</i>
<i style="left:156px;top:208px;">c0428L14*</i>
<i style="left:357px;top:208px;">b0376D09</i>
<i style="left:526px;top:208px;">b0036P12</i>
<i style="left:687px;top:208px;">b0372B16*</i>
<i style="left:826px;top:208px;color:#b4b4b4;">c0</i>
<b style="left:0px;top:240px;width:11px;height:1px;background:#000"></b>
<b style="left:102px;top:240px;width:153px;height:1px;background:#000"></b>
<b style="left:298px;top:240px;width:121px;height:1px;background:#0000ff"></b>
<b style="left:486px;top:240px;width:105px;height:1px;background:#000"></b>
<b style="left:666px;top:240px;width:93px;height:1px;background:#000"></b>
<b style="left:782px;top:240px;width:54px;height:1px;background:#000"></b>
<i style="left:149px;top:228px;">c0171D14</i>
<i style="left:318px;top:228px;color:#0000ff;">AC149826sd1</i>
<i style="left:510px;top:228px;">c0030K09</i>
<i style="left:681px;top:228px;">b0070O12</i>
<i style="left:827px;top:228px;">c0</i>
<b style="left:0px;top:260px;width:31px;height:1px;background:#b4b4b4"></b>
<b style="left:102px;top:260px;width:221px;height:1px;background:#000"></b>
<b style="left:478px;top:260px;width:149px;height:1px;background:#000"></b>
<b style="left:658px;top:260px;width:124px;height:1px;background:#b4b4b4"></b>
<b style="left:782px;top:260px;width:54px;height:1px;background:#000"></b>
<i style="left:154px;top:248px;">c0021K04</i>
<i style="left:258px;top:248px;">b0458E10</i>
<i style="left:519px;top:248px;">c0090F22*</i>
<i style="left:691px;top:248px;color:#b4b4b4;">c0241D03*</i>
<i style="left:820px;top:248px;">c02</i>
<b style="left:94px;top:280px;width:137px;height:1px;background:#000"></b>
<b style="left:246px;top:280px;width:73px;height:1px;background:#000"></b>
<b style="left:478px;top:280px;width:109px;height:1px;background:#000"></b>
<b style="left:650px;top:280px;width:105px;height:1px;background:#000"></b>
<b style="left:782px;top:280px;width:54px;height:1px;background:#000"></b>
<i style="left:133px;top:268px;">c0165D23</i>
<i style="left:254px;top:268px;">b0301K21</i>
<i style="left:502px;top:268px;">b0359L11</i>
<i style="left:674px;top:268px;">b0347I02*</i>
<i style="left:828px;top:268px;">c0</i>
<b style="left:82px;top:300px;width:128px;height:1px;background:#000"></b>
<b style="left:210px;top:300px;width:137px;height:1px;background:#b4b4b4"></b>
<b style="left:454px;top:300px;width:137px;height:1px;background:#000"></b>
<b style="left:642px;top:300px;width:81px;height:1px;background:#000"></b>
<b style="left:766px;top:300px;width:70px;height:1px;background:#000"></b>
<i style="left:131px;top:288px;">c0112C03*</i>
<i style="left:246px;top:288px;color:#b4b4b4;">c0088M21*</i>
<i style="left:493px;top:288px;">c0435D17</i>
<i style="left:654px;top:288px;">b0392K07</i>
<i style="left:801px;top:288px;">c0026</i>
</div>
<div class="c" style="left:30px;top:622px;width:836px;height:37px">
<i style="left:101px;top:4px;">c0383D08 – Birren,B.</i>
<i style="left:298px;top:4px;">c0046N19 – Birren,B.</i>
<i style="left:559px;top:4px;">b0340I09 – Birren,B.</i>
<i style="left:794px;top:4px;">c0429P14 – Birren,B.</i>
<i style="left:4px;top:19px;">– Birren,B.</i>
<i style="left:216px;top:19px;">c0088M21 – Birren,B.</i>
<i style="left:454px;top:19px;">c0127E02 – Birren,B.</i>
<i style="left:662px;top:19px;">c0241D03 – Birren,B.</i>
</div>
<div class="c" style="left:30px;top:668px;width:836px;height:51px">
<b style="left:155px;top:0px;width:102px;height:51px;background:#ffffff"></b>
<b style="left:86px;top:8px;width:1px;height:41px;background:#b4b4b4"></b>
<i style="left:86px;top:4px;color:#b4b4b4;">umc1804</i>
<b style="left:229px;top:8px;width:1px;height:41px;background:#b4b4b4"></b>
<i style="left:229px;top:4px;color:#b4b4b4;">bnlg1506</i>
<b style="left:279px;top:8px;width:1px;height:41px;background:#b4b4b4"></b>
<i style="left:279px;top:4px;color:#b4b4b4;">umc1714</i>
<b style="left:516px;top:8px;width:1px;height:41px;background:#b4b4b4"></b>
<i style="left:515px;top:4px;color:#b4b4b4;">umc1104</i>
<b style="left:217px;top:23px;width:1px;height:26px;background:#b4b4b4"></b>
<i style="left:217px;top:19px;color:#b4b4b4;">umc2359</i>
<b style="left:324px;top:23px;width:1px;height:26px;background:#b4b4b4"></b>
<i style="left:324px;top:19px;color:#b4b4b4;">bnlg128</i>
<b style="left:500px;top:23px;width:1px;height:26px;background:#b4b4b4"></b>
<i style="left:499px;top:19px;color:#b4b4b4;">umc1942</i>
<b style="left:640px;top:23px;width:1px;height:26px;background:#b4b4b4"></b>
<i style="left:640px;top:19px;color:#b4b4b4;">PCO127750</i>
<b style="left:680px;top:23px;width:1px;height:26px;background:#b4b4b4"></b>
<i style="left:679px;top:19px;color:#b4b4b4;">umc1982</i>
<b style="left:9px;top:38px;width:1px;height:11px;background:#b4b4b4"></b>
<i style="left:9px;top:34px;color:#b4b4b4;">phi448880</i>
<b style="left:140px;top:38px;width:1px;height:11px;background:#b4b4b4"></b>
<i style="left:141px;top:34px;color:#b4b4b4;">AY110362</i>
<b style="left:267px;top:38px;width:1px;height:11px;background:#b4b4b4"></b>
<i style="left:267px;top:34px;color:#b4b4b4;">bnlg1375</i>
<b style="left:300px;top:38px;width:1px;height:11px;background:#b4b4b4"></b>
<i style="left:300px;top:34px;color:#b4b4b4;">umc2347</i>
<b style="left:535px;top:38px;width:1px;height:11px;background:#b4b4b4"></b>
<i style="left:535px;top:34px;color:#b4b4b4;">PCO127444</i>
<b style="left:622px;top:38px;width:1px;height:11px;background:#b4b4b4"></b>
<i style="left:622px;top:34px;color:#b4b4b4;">csu54b</i>
<b style="left:811px;top:38px;width:1px;height:11px;background:#b4b4b4"></b>
<i style="left:803px;top:34px;color:#b4b4b4;">bnlg1160</i>
<b style="left:186px;top:8px;width:1px;height:41px;background:#ff0000"></b>
<i style="left:186px;top:4px;color:#ff0000;">mgs2#4</i>
<b style="left:608px;top:8px;width:1px;height:41px;background:#ff0000"></b>
<i style="left:607px;top:4px;color:#ff0000;">fgp1#1</i>
<b style="left:743px;top:8px;width:1px;height:41px;background:#ff0000"></b>
<i style="left:742px;top:4px;color:#ff0000;">PCO096835#2</i>
<b style="left:608px;top:23px;width:1px;height:26px;background:#ff0000"></b>
<i style="left:607px;top:19px;color:#ff0000;">umc2025#1</i>
<b style="left:381px;top:8px;width:1px;height:41px;background:#000"></b>
<i style="left:381px;top:4px;">AY106323</i>
<b style="left:641px;top:8px;width:1px;height:41px;background:#000"></b>
<i style="left:643px;top:4px;">AI901738</i>
<b style="left:78px;top:23px;width:1px;height:26px;background:#000"></b>
<i style="left:80px;top:19px;">AY109543</i>
<b style="left:157px;top:23px;width:1px;height:26px;background:#000"></b>
<i style="left:157px;top:19px;">bnlg619</i>
<b style="left:266px;top:23px;width:1px;height:26px;background:#000"></b>
<i style="left:266px;top:19px;">umc2131</i>
<b style="left:210px;top:38px;width:1px;height:11px;background:#000"></b>
<i style="left:210px;top:34px;">umc2089</i>
<b style="left:496px;top:38px;width:1px;height:11px;background:#000"></b>
<i style="left:496px;top:34px;">umc1137</i>
<b style="left:661px;top:38px;width:1px;height:11px;background:#000"></b>
<i style="left:661px;top:34px;">umc1505</i>
</div>
</body></html>
